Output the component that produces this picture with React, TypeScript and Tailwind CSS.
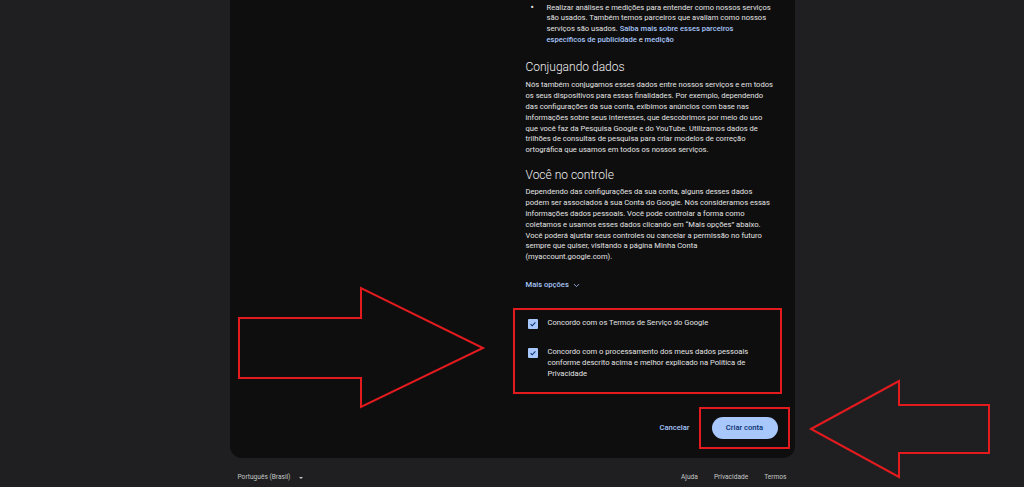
import { ChevronDown } from "lucide-react";

const font = { fontFamily: "Roboto, 'Noto Sans', Arial, sans-serif" };

function Check() {
  return (
    <div className="mt-[1px] flex h-[10px] w-[10px] shrink-0 items-center justify-center rounded-[1px] bg-[#a8c7fa]">
      <svg viewBox="0 0 10 10" className="h-[8px] w-[8px]">
        <path d="M2 5.2 L4 7.2 L8 3" fill="none" stroke="#062e6f" strokeWidth="1.3" />
      </svg>
    </div>
  );
}

function Annotations() {
  return (
    <svg className="pointer-events-none absolute inset-0 h-full w-full" viewBox="0 0 1024 487">
      <g fill="none" stroke="#e31b1f" strokeWidth="2">
        <polygon points="239,318 361,318 361,288 483,348 361,407 361,378 239,378" />
        <polygon points="811,429 899,381 899,405 989,405 989,453 899,453 899,477" />
        <rect x="514" y="309" width="267" height="84" />
        <rect x="700" y="408" width="89" height="40" />
      </g>
    </svg>
  );
}

export default function App() {
  return (
    <div style={font} className="relative flex h-[487px] w-full flex-col items-center overflow-hidden bg-[#1f1f21] text-[#e3e3e3]">
      <div className="flex h-[458px] w-[565px] shrink-0 rounded-b-[12px] bg-[#0e0e0f]">
        <div className="w-[296px] shrink-0" />
        <div className="flex w-[252px] flex-col text-[7.6px] leading-[10.8px]">
          <ul className="mt-[2.6px] pl-[21px]">
            <li className="relative">
              <span className="absolute -left-[16px] top-0 text-[10px]">•</span>
              Realizar análises e medições para entender como nossos serviços<br />
              são usados. Também temos parceiros que avaliam como nossos<br />
              serviços são usados. <span className="font-medium text-[#a8c7fa]">Saiba mais sobre esses parceiros</span>
              <br />
              <span className="font-medium text-[#a8c7fa]">específicos de publicidade</span> e{" "}
              <span className="font-medium text-[#a8c7fa]">medição</span>
            </li>
          </ul>

          <h2 className="mt-[14.7px] text-[12px] font-light leading-[15px] text-[#f1f1f1]">Conjugando dados</h2>
          <p className="mt-[5px]">
            Nós também conjugamos esses dados entre nossos serviços e em todos<br />
            os seus dispositivos para essas finalidades. Por exemplo, dependendo<br />
            das configurações da sua conta, exibimos anúncios com base nas<br />
            informações sobre seus interesses, que descobrimos por meio do uso<br />
            que você faz da Pesquisa Google e do YouTube. Utilizamos dados de<br />
            trilhões de consultas de pesquisa para criar modelos de correção<br />
            ortográfica que usamos em todos os nossos serviços.
          </p>

          <h2 className="mt-[12.3px] text-[12px] font-light leading-[15px] text-[#f1f1f1]">Você no controle</h2>
          <p className="mt-[4px]">
            Dependendo das configurações da sua conta, alguns desses dados<br />
            podem ser associados à sua Conta do Google. Nós consideramos essas<br />
            informações dados pessoais. Você pode controlar a forma como<br />
            coletamos e usamos esses dados clicando em “Mais opções” abaixo.<br />
            Você poderá ajustar seus controles ou cancelar a permissão no futuro<br />
            sempre que quiser, visitando a página Minha Conta<br />
            (myaccount.google.com).
          </p>

          <div className="mt-[17.4px] flex items-center gap-[3px] font-medium text-[#a8c7fa]">
            Mais opções
            <ChevronDown size={9} strokeWidth={2.2} />
          </div>

          <div className="mt-[27.2px] flex flex-col gap-[18.2px] pl-[2px]">
            <div className="flex gap-[10px]">
              <Check />
              <span>Concordo com os Termos de Serviço do Google</span>
            </div>
            <div className="flex gap-[10px]">
              <Check />
              <span>
                Concordo com o processamento dos meus dados pessoais<br />
                conforme descrito acima e melhor explicado na Política de<br />
                Privacidade
              </span>
            </div>
          </div>

          <div className="mt-[37.4px] flex items-center justify-end gap-[22px]">
            <button className="font-medium text-[#a8c7fa]">Cancelar</button>
            <button className="h-[21.6px] w-[66px] rounded-full bg-[#a8c7fa] font-medium text-[#062e6f]">
              Criar conta
            </button>
          </div>
        </div>
      </div>

      <div className="flex w-[565px] items-center justify-between px-[8px] pt-[15px] text-[6.6px] text-[#c4c7c5]">
        <div className="flex items-center gap-[9px]">
          <span>Português (Brasil)</span>
          <span className="h-0 w-0 border-x-[2.5px] border-t-[2.5px] border-x-transparent border-t-[#c4c7c5]" />
        </div>
        <div className="flex gap-[16px]">
          <span>Ajuda</span>
          <span>Privacidade</span>
          <span>Termos</span>
        </div>
      </div>

      <Annotations />
    </div>
  );
}
